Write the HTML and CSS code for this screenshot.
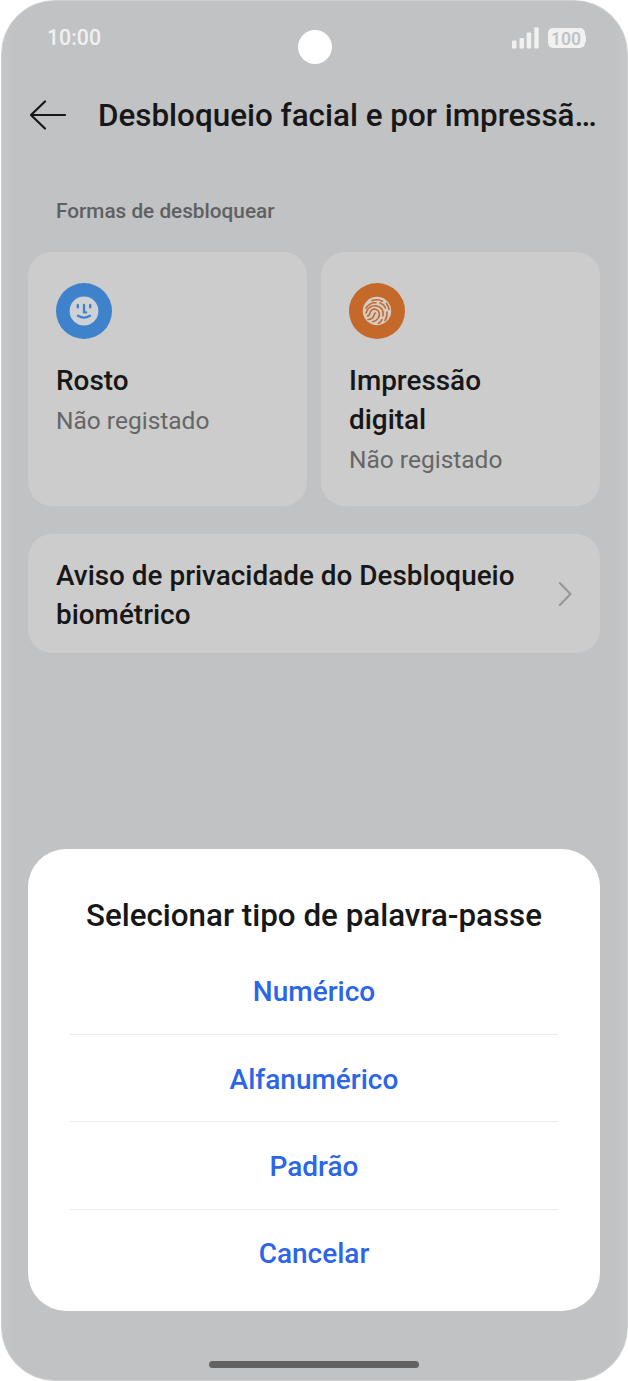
FILE: index.html
```html
<!DOCTYPE html>
<html lang="pt">
<head>
<meta charset="utf-8">
<title>Desbloqueio facial e por impressão digital</title>
<link rel="stylesheet" href="styles.css">
</head>
<body>
<div class="phone">
  <header class="status">
    <span class="time">10:00</span>
    <span class="camera"></span>
    <span class="indicators">
      <svg class="signal" width="28" height="22" viewBox="0 0 28 22" fill="#f1f1f1"><rect x="0" y="13.5" width="4.5" height="8" rx="1"/><rect x="7.5" y="11" width="4.5" height="10.5" rx="1"/><rect x="14.7" y="5.5" width="4.5" height="16" rx="1"/><rect x="22.3" y="0.3" width="4.4" height="21.2" rx="1"/></svg>
      <span class="battery">100</span>
    </span>
  </header>
  <div class="topbar">
    <svg class="back" width="38" height="32" viewBox="0 0 38 32" fill="none" stroke="#171717" stroke-width="2.2" stroke-linecap="round" stroke-linejoin="round"><path d="M36 16H2M16 2.5 2 16l14 13.5"/></svg>
    <h1>Desbloqueio facial e por impressã…</h1>
  </div>
  <h2>Formas de desbloquear</h2>
  <div class="cards">
    <section class="card">
      <svg width="56" height="56" viewBox="0 0 56 56"><circle cx="28" cy="28" r="28" fill="#3d82cb"/><circle cx="28" cy="28" r="14.4" fill="#cfd2d5"/><g fill="none" stroke="#3d82cb" stroke-width="2.3" stroke-linecap="round" stroke-linejoin="round"><path d="M21.8 22v2.4M34.2 22v2.4M28 22v7.3h2.2M22 32.8q6 3.6 12 0"/></g></svg>
      <h3>Rosto</h3>
      <p>Não registado</p>
    </section>
    <section class="card">
      <svg width="56" height="56" viewBox="0 0 56 56"><circle cx="28" cy="28" r="28" fill="#c5692a"/><circle cx="28" cy="28" r="14.2" fill="#d3cbc5"/><g fill="none" stroke="#c5692a" stroke-width="1.6" stroke-linecap="round"><path d="M23 17.6q5.5-2 10.500.6M17 25c2.500-4 5.500-5.500 10-5.300M31 20q4 1.500 5.500 5M37.500 20.500q2.300 3 2.500 6M17 30c1-5 6-8.200 11-7 5 1.200 6.700 5.500 6 10M38 29q.5 4.500-2 8.500M18.500 33c2.500 0 2-3.500 3.500-5.300 2.500-2.800 7.300-1.500 8.300 2 .9 4.200-2 8-6.500 9M19 36.500q4.500 0 5.700-3.500c.7-2 .5-2.800 1.800-3M33 36.500q-1 2.500-3.500 4"/></g></svg>
      <h3>Impressão digital</h3>
      <p>Não registado</p>
    </section>
  </div>
  <section class="notice">
    <h3>Aviso de privacidade do Desbloqueio biométrico</h3>
    <svg width="14" height="26" viewBox="0 0 14 26" fill="none" stroke="#969696" stroke-width="2" stroke-linecap="round" stroke-linejoin="round"><path d="M1.8 2 12.5 13 1.8 24"/></svg>
  </section>
  <div class="dialog" role="dialog">
    <h2 class="dialog-title">Selecionar tipo de palavra-passe</h2>
    <button>Numérico</button>
    <button>Alfanumérico</button>
    <button>Padrão</button>
    <button>Cancelar</button>
  </div>
  <div class="home"></div>
</div>
</body>
</html>
```
FILE: styles.css
```css
* { box-sizing: border-box; }
body { margin: 0; background: #fff; font-family: Roboto, "Liberation Sans", sans-serif; color: #171717; }
h1, h2, h3, p { margin: 0; font-weight: 500; }
.phone {
  width: 627px; height: 1381px; margin-left: 1px;
  display: flex; flex-direction: column;
  border: 1px solid #cfd0d1; border-radius: 54px;
  padding: 0 26px;
  background: linear-gradient(90deg, #c5c6c7, #c0c2c4 14px, #c0c2c4 611px, #c5c6c7);
}
.status { height: 73px; display: grid; grid-template-columns: 1fr 34px 1fr; }
.time { margin: 24px 0 0 19px; font-size: 21.3px; line-height: 26px; font-weight: 500; color: #f1f1f1; }
.camera { width: 34px; height: 34px; margin-top: 29px; border-radius: 50%; background: #fff; }
.indicators { display: flex; justify-content: flex-end; padding: 26px 16.5px 0 0; gap: 8px; }
.battery { position: relative; width: 37px; height: 20px; margin-top: 1px; border-radius: 5px; background: #f1f1f1; color: #c0c2c4; font-size: 17.5px; font-weight: 600; line-height: 22px; text-align: center; }
.battery::after { content: ""; position: absolute; right: -1.5px; top: 7px; width: 3px; height: 7px; border-radius: 1px; background: #f1f1f1; }
.topbar { display: flex; align-items: center; height: 82px; padding-left: 1px; gap: 31px; }
.topbar svg { flex: none; }
h1 { font-size: 31.4px; white-space: nowrap; line-height: 40px; padding-top: 2px; }
h2 { margin: 41px 0 0 28px; font-size: 20.75px; line-height: 28px; color: #5f6061; }
.cards { display: grid; grid-template-columns: 279px 279px; gap: 14px; margin-top: 27px; }
.card { height: 254px; padding: 31px 28px 0; border-radius: 24px; background: #ccc; }
.card svg { display: block; margin-bottom: 22px; }
h3 { font-size: 27.9px; line-height: 39px; }
.card h3 { width: 170px; }
.card p { font-size: 24.5px; line-height: 32px; margin-top: 5px; font-weight: 400; color: #666; white-space: nowrap; }
.notice { width: 572px; height: 119px; margin-top: 28px; padding: 0 28px; display: flex; align-items: center; justify-content: space-between; border-radius: 24px; background: #ccc; }
.notice h3 { width: 480px; margin-top: 3px; }
.dialog { width: 572px; height: 462px; margin-top: 196px; padding: 47px 42px 0; border-radius: 38px; background: #fff; display: flex; flex-direction: column; }
.dialog-title { margin: 0 -20px; height: 51px; font-size: 31.35px; line-height: 40px; color: #171717; text-align: center; white-space: nowrap; }
button { height: 87.5px; flex: none; padding: 3px 0 0; border: 0; border-bottom: 1px solid #ebebeb; background: none; font: 500 28px/39px Roboto, sans-serif; color: #2c65e8; }
button:last-child { height: 84px; border: 0; }
.home { width: 210px; height: 7px; margin: 50px 0 0 181px; border-radius: 4px; background: #626262; }
```
